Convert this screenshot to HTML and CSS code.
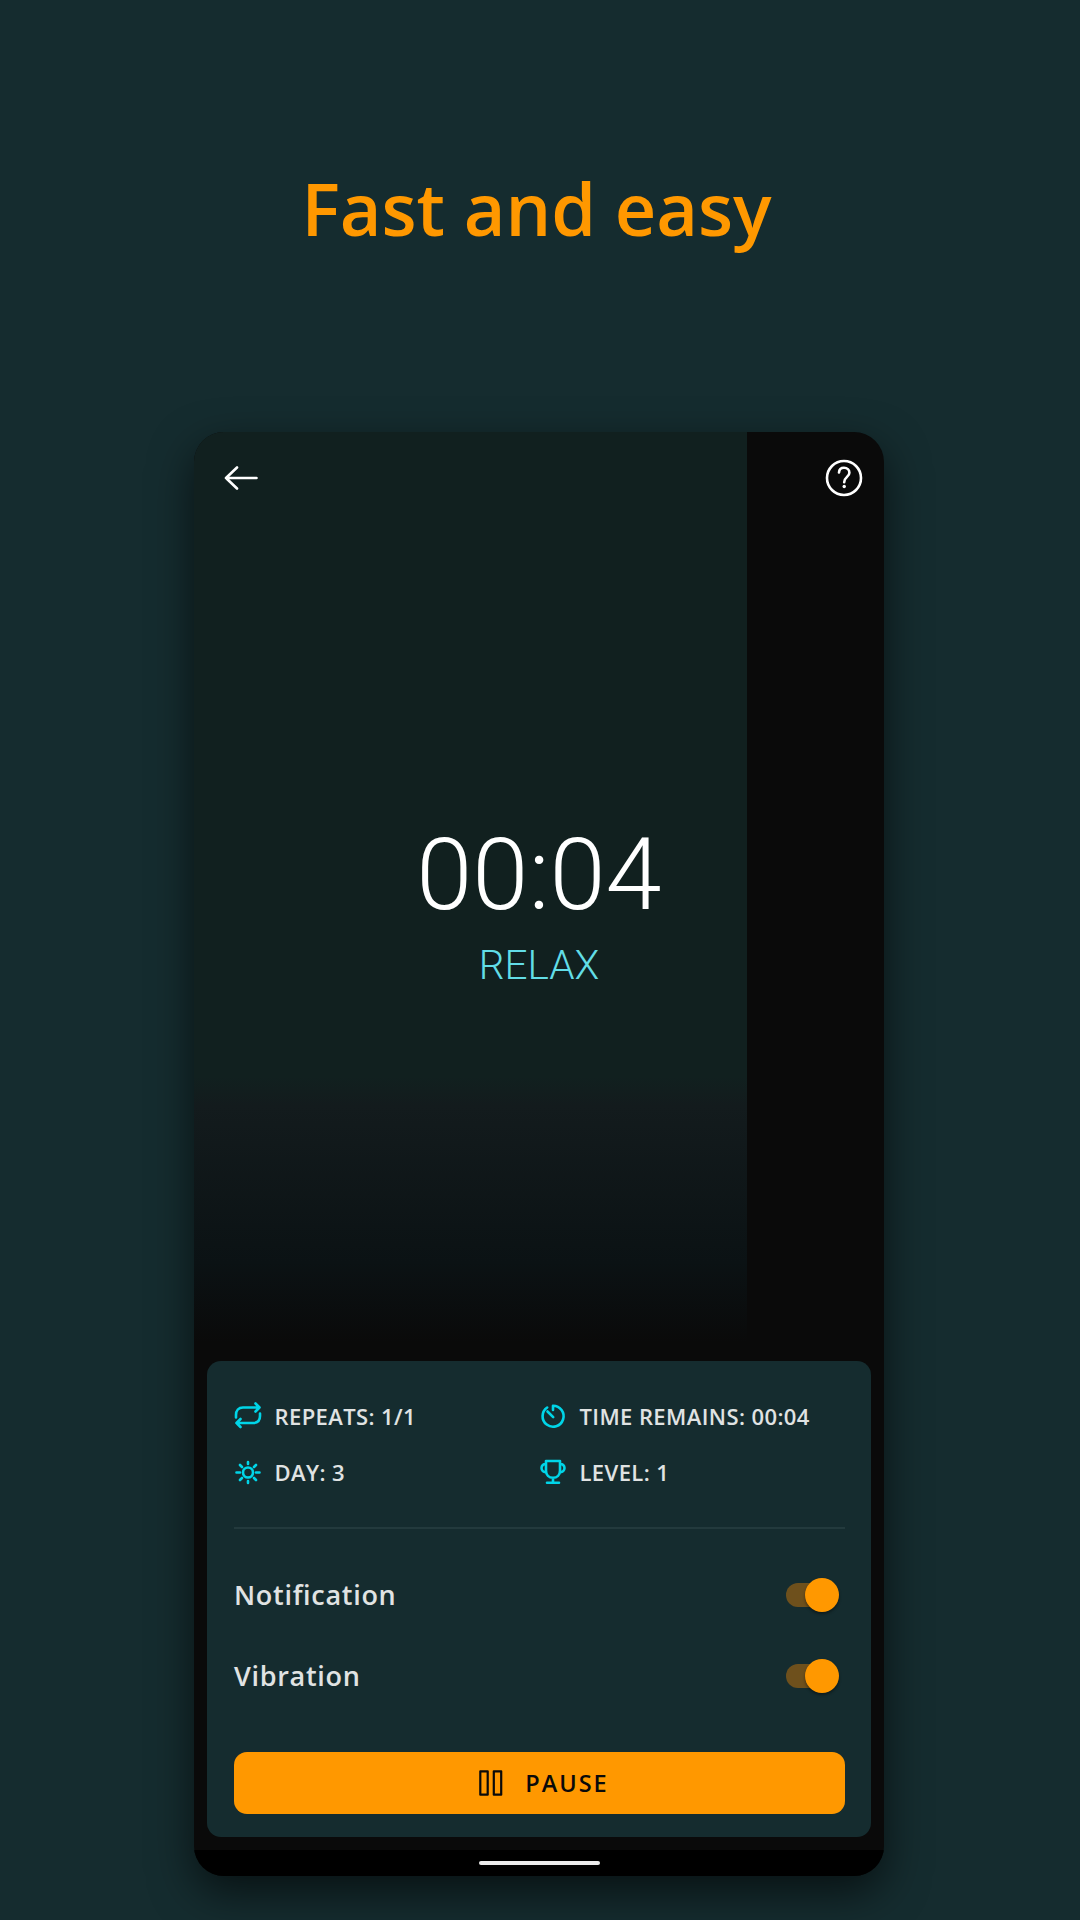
FILE: index.html
```html
<!DOCTYPE html>
<html lang="en">
<head>
<meta charset="utf-8">
<title>Fast and easy</title>
<link rel="stylesheet" href="styles.css">
</head>
<body>
<h1 class="headline">Fast and easy</h1>
<main class="phone">
  <section class="timer">
    <header class="topbar">
      <svg class="back" viewBox="0 0 36 28" fill="none"><path d="M33.5 14H3M14 3.5L3 14l11 10.500"/></svg>
      <svg class="help" viewBox="0 0 38 38" fill="none"><circle cx="19" cy="19" r="17"/><path d="M14 13.500C14.200 10.500 16.200 8.800 19 8.800c3.200 0 5.400 2 5.400 4.900 0 4.300-5.200 4.200-5.200 9.500"/><circle class="dot" cx="19.200" cy="27.500" r="1.700"/></svg>
    </header>
    <div class="time">00:04</div>
    <div class="phase">RELAX</div>
  </section>
  <section class="card">
    <div class="stats">
      <div class="stat">
        <svg viewBox="0 0 28 28" fill="none"><path d="M2 15.500v-2.500c0-4.500 2.500-7.500 7-7.500h16.500M21.500 1.500l4 4-4 4M26 11.500v2.500c0 4.500-2.500 7-7 7H2.500M6.500 17l-4 4 4 4"/></svg>
        <span>REPEATS: 1/1</span>
      </div>
      <div class="stat">
        <svg viewBox="0 0 28 28" fill="none"><path d="M14 8V3.700A10.500 10.500 0 1 1 8.200 5.500M8.500 9.500l5.700 5.700"/></svg>
        <span>TIME REMAINS: 00:04</span>
      </div>
      <div class="stat">
        <svg viewBox="0 0 28 28" fill="none"><circle cx="14" cy="14.500" r="5"/><path d="M2.500 14.500h3.500M22 14.500h3.500M6 7l2 2M20 20l2 2M6 22l2-2M20 9l2-2M14 4v2M14 23v2"/></svg>
        <span>DAY: 3</span>
      </div>
      <div class="stat">
        <svg viewBox="0 0 28 28" fill="none"><path d="M7 3h14v9.500c0 4.500-3 7.300-7 7.300S7 17 7 12.500zM7 6c-2.500-.3-4.500 1.500-4.500 4s2 4.500 4.500 4.200M21 6c2.500-.3 4.500 1.500 4.500 4s-2 4.500-4.500 4.200M14 19.800v4.700M8 24.800h12"/></svg>
        <span>LEVEL: 1</span>
      </div>
    </div>
    <div class="setting">Notification<span class="switch"></span></div>
    <div class="setting">Vibration<span class="switch"></span></div>
    <button class="pause"><svg viewBox="0 0 24 28" fill="none"><path d="M1.300 2.300h7.400v23.400H1.300zM14.800 2.300h7.400v23.400h-7.400z"/></svg><span>PAUSE</span></button>
  </section>
  <footer class="nav"><div class="home"></div></footer>
</main>
</body>
</html>
```
FILE: styles.css
```css
* { box-sizing: border-box; }
body {
  margin: 0;
  height: 1920px;
  overflow: hidden;
  background: #152c2f;
  font-family: "Open Sans", sans-serif;
  font-weight: 600;
}
.headline {
  margin: 0;
  padding: 159px 7px 0 0;
  height: 432px;
  text-align: center;
  color: #ff9800;
  font-size: 72px;
  line-height: 98px;
  font-weight: 600;
}
.phone {
  width: 690px;
  height: 1444px;
  margin-left: 194px;
  border-radius: 30px;
  overflow: hidden;
  background: #0a0a0a;
  box-shadow: 0 16px 44px rgba(0, 0, 0, .6);
  display: flex;
  flex-direction: column;
}
.timer {
  height: 929px;
  background: linear-gradient(#11201f 0 645px, #131b1d 675px, #0b1214 830px, #0a0a0a 910px) no-repeat 0 0 / 553px 100%;
  text-align: center;
  font-family: Roboto, sans-serif;
  font-weight: 300;
}
.topbar {
  display: flex;
  justify-content: space-between;
  align-items: center;
  height: 92px;
  padding: 0 21px 0 29px;
}
.topbar svg { stroke: #fff; stroke-width: 2.6; stroke-linecap: round; stroke-linejoin: round; }
.back { width: 36px; height: 28px; }
.help { width: 38px; height: 38px; }
.help .dot { fill: #fff; stroke: none; }
.time {
  margin-top: 291px;
  font-size: 101px;
  line-height: 120px;
  color: #fff;
}
.phase {
  margin-top: 6px;
  font-size: 40.500px;
  line-height: 48px;
  color: #62dde6;
}
.card {
  width: 664px;
  height: 476px;
  margin-left: 13px;
  padding: 27px 26px 0 27px;
  border-radius: 14px;
  background: #152c2f;
  color: #e0e3e3;
}
.stats {
  display: grid;
  grid-template-columns: 305px 306px;
  grid-template-rows: 56px 56px;
  height: 141px;
  border-bottom: 2px solid #233a3d;
}
.stat {
  display: flex;
  align-items: center;
  gap: 12.500px;
  font-size: 22px;
  letter-spacing: .4px;
  white-space: nowrap;
}
.stat svg { width: 28px; height: 28px; stroke: #00d5e8; stroke-width: 2.6; stroke-linecap: round; stroke-linejoin: round; }
.setting {
  display: flex;
  justify-content: space-between;
  align-items: center;
  height: 81px;
  padding-right: 6px;
  font-size: 27px;
  letter-spacing: .7px;
}
.stats + .setting { margin-top: 25px; }
.switch {
  display: flex;
  justify-content: flex-end;
  align-items: center;
  width: 53px;
  height: 24px;
  border-radius: 12px;
  background: linear-gradient(90deg, #6e501c 0 36px, transparent 36px);
}
.switch::after {
  content: "";
  width: 34px;
  height: 34px;
  border-radius: 50%;
  background: #ff9800;
  box-shadow: 0 2px 3px rgba(0, 0, 0, .4);
}
.pause {
  display: flex;
  justify-content: center;
  align-items: center;
  gap: 22px;
  width: 611px;
  height: 62px;
  margin-top: 36px;
  padding: 0 0 0 9px;
  border: 0;
  border-radius: 13px;
  background: #ff9800;
  color: #0a0a0a;
  font: 600 23.500px "Open Sans", sans-serif;
  letter-spacing: 2px;
}
.pause svg { width: 24px; height: 28px; stroke: #0a0a0a; stroke-width: 2.2; stroke-linejoin: round; }
.nav {
  height: 26px;
  margin-top: auto;
  background: #000;
  display: flex;
  justify-content: center;
  align-items: center;
}
.home { width: 121px; height: 4px; border-radius: 2px; background: #ececec; }
```
